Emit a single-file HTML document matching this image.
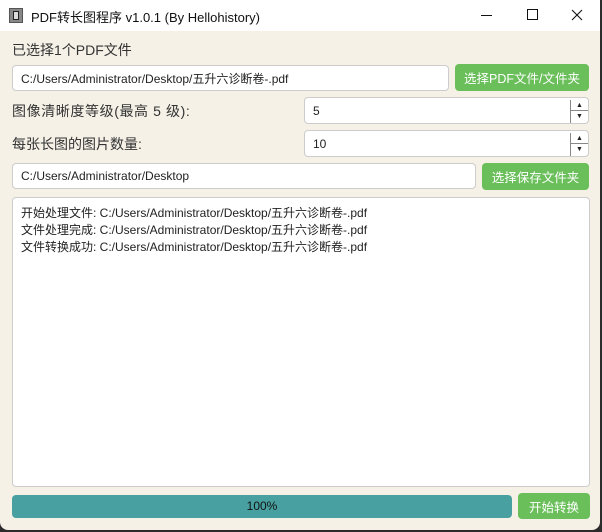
<!DOCTYPE html>
<html><head><meta charset="utf-8"><style>
*{box-sizing:border-box;margin:0;padding:0}
body{width:602px;height:532px;background:#2b2b2b;font-family:"Liberation Sans","Noto Sans CJK SC",sans-serif;overflow:hidden;position:relative}
.win{position:absolute;left:0;top:0;width:600px;height:530px;background:#f5f1e7;border-radius:0 0 8px 8px;overflow:hidden}
.title{position:absolute;left:0;top:0;width:600px;height:31px;background:#fff;font-size:13px;color:#111}
.abs{position:absolute}
.inp{position:absolute;background:#fff;border:1px solid #ccc;border-radius:4px;font-size:12px;color:#222;padding-left:8px;display:flex;align-items:center}
.btn{position:absolute;background:#6abf5a;color:#fff;border-radius:4px;font-size:12.5px;display:flex;align-items:center;justify-content:center}
.lbl{position:absolute;font-size:14px;color:#333}
.spin{position:absolute;right:0;top:2px;width:18px;height:23px;border-left:1px solid #888}
</style></head><body><div class="win">
<div class="title">
<div class="abs" style="left:9px;top:8px;width:14px;height:15px;background:#888;border:1px solid #555"><div style="position:absolute;left:3px;top:2px;width:6px;height:9px;border:1px solid #222;background:#ddd"></div></div>
<div class="abs" style="left:31px;top:7px">PDF转长图程序 v1.0.1 (By Hellohistory)</div>
<div class="abs" style="left:481px;top:15px;width:11px;height:1px;background:#111"></div>
<div class="abs" style="left:527px;top:9px;width:11px;height:11px;border:1px solid #111"></div>
<svg class="abs" style="left:571px;top:9px" width="12" height="12"><path d="M1 1L11 11M11 1L1 11" stroke="#111" stroke-width="1.1"/></svg>
</div>
<div class="lbl" style="left:12px;top:40px">已选择1个PDF文件</div>
<div class="inp" style="left:12px;top:65px;width:437px;height:26px">C:/Users/Administrator/Desktop/五升六诊断卷-.pdf</div>
<div class="btn" style="left:455px;top:64px;width:134px;height:27px">选择PDF文件/文件夹</div>
<div class="lbl" style="left:12px;top:101px;letter-spacing:0.6px">图像清晰度等级(最高 5 级):</div>
<div class="inp" style="left:304px;top:97px;width:285px;height:27px">5<div class="spin"><div style="font-size:7px;text-align:center;color:#222;border-bottom:1px solid #888;height:11px;line-height:11px">▲</div><div style="font-size:7px;text-align:center;color:#222;line-height:11px">▼</div></div></div>
<div class="lbl" style="left:12px;top:134px">每张长图的图片数量:</div>
<div class="inp" style="left:304px;top:130px;width:285px;height:27px">10<div class="spin"><div style="font-size:7px;text-align:center;color:#222;border-bottom:1px solid #888;height:11px;line-height:11px">▲</div><div style="font-size:7px;text-align:center;color:#222;line-height:11px">▼</div></div></div>
<div class="inp" style="left:12px;top:163px;width:464px;height:26px">C:/Users/Administrator/Desktop</div>
<div class="btn" style="left:482px;top:163px;width:107px;height:27px">选择保存文件夹</div>
<div class="inp" style="left:12px;top:197px;width:578px;height:290px;display:block;padding-top:7px;line-height:17px">开始处理文件: C:/Users/Administrator/Desktop/五升六诊断卷-.pdf<br>文件处理完成: C:/Users/Administrator/Desktop/五升六诊断卷-.pdf<br>文件转换成功: C:/Users/Administrator/Desktop/五升六诊断卷-.pdf</div>
<div class="abs" style="left:12px;top:495px;width:500px;height:23px;background:#48a0a0;border-radius:4px;font-size:12px;color:#111;text-align:center;line-height:23px">100%</div>
<div class="btn" style="left:518px;top:493px;width:72px;height:26px">开始转换</div>
</div></body></html>
